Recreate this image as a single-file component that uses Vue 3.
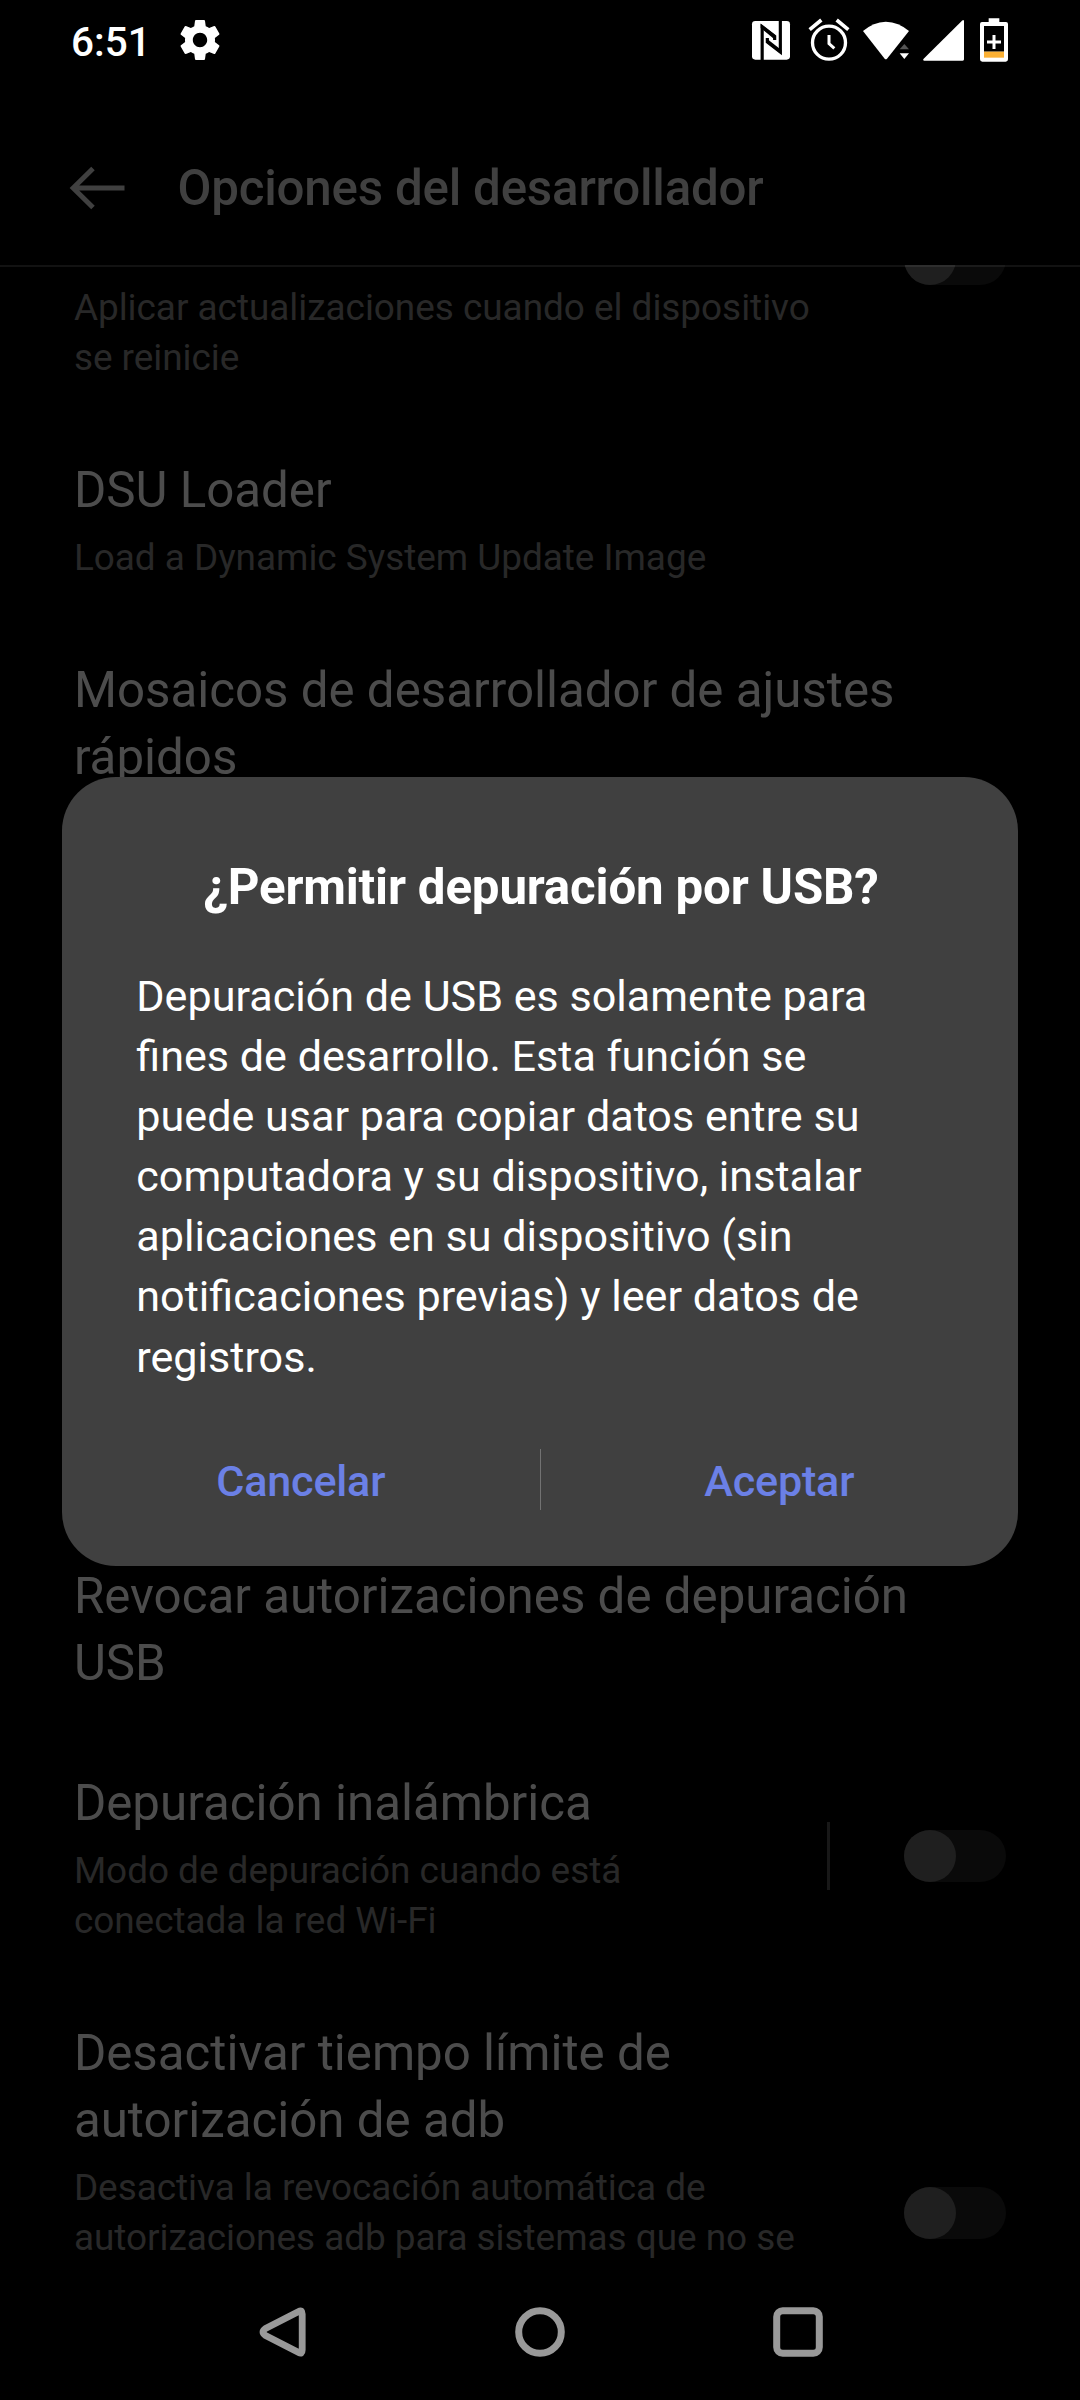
<script setup>
const items = [
  {
    summary: 'Aplicar actualizaciones cuando el dispositivo\nse reinicie',
    toggle: true,
    toggleTop: -32,
  },
  {
    title: 'DSU Loader',
    summary: 'Load a Dynamic System Update Image',
  },
  { title: 'Mosaicos de desarrollador de ajustes\nrápidos' },
  {
    title: 'Revocar autorizaciones de depuración\nUSB',
    gapBefore: 698,
  },
  {
    title: 'Depuración inalámbrica',
    summary: 'Modo de depuración cuando está\nconectada la red Wi-Fi',
    toggle: true,
    divider: true,
    toggleTop: 52,
    gapBefore: -1,
  },
  {
    title: 'Desactivar tiempo límite de\nautorización de adb',
    summary: 'Desactiva la revocación automática de\nautorizaciones adb para sistemas que no se',
    toggle: true,
    toggleTop: 167,
  },
]
</script>

<template>
  <div class="phone">
    <div class="statusbar">
      <div class="status-left">
        <span class="clock">6:51</span>
        <svg class="gear" width="48" height="48" viewBox="0 0 24 24" fill="#fff">
          <path d="M19.43 12.98c.04-.32.07-.64.07-.98s-.03-.66-.07-.98l2.11-1.65c.19-.15.24-.42.12-.64l-2-3.46c-.12-.22-.39-.3-.61-.22l-2.49 1c-.52-.4-1.080-.73-1.690-.98l-.38-2.650C14.460 2.180 14.250 2 14 2h-4c-.25 0-.46.18-.49.42l-.38 2.650c-.61.25-1.170.59-1.690.98l-2.490-1c-.23-.09-.49 0-.61.22l-2 3.460c-.13.22-.07.49.12.64l2.110 1.650c-.04.32-.07.65-.07.98s.03.66.07.98l-2.110 1.650c-.19.15-.24.42-.12.64l2 3.460c.12.22.39.3.61.22l2.490-1c.52.4 1.080.73 1.690.98l.38 2.650c.03.24.24.42.49.42h4c.25 0 .46-.18.49-.42l.38-2.650c.61-.25 1.170-.59 1.690-.98l2.490 1c.23.09.49 0 .61-.22l2-3.460c.12-.22.07-.49-.12-.64l-2.110-1.650zM12 15.600c-1.980 0-3.600-1.620-3.600-3.600s1.620-3.600 3.600-3.600 3.600 1.620 3.600 3.600-1.620 3.600-3.600 3.600z" />
        </svg>
      </div>
      <svg class="status-right" width="300" height="80" viewBox="0 0 900 240" fill="none">
        <!-- NFC -->
        <rect x="66" y="63" width="114" height="116" rx="10" fill="#fff" />
        <path d="M96.500 180V80L134 109V120" stroke="#000" stroke-width="9.500" />
        <path d="M92 72l43 33v14L92 84z" fill="#000" />
        <path d="M151 62V156L112 126V114" stroke="#000" stroke-width="9.500" />
        <path d="M155 163l-47-36v-13L155 151z" fill="#000" />
        <!-- Alarm -->
        <circle cx="297" cy="128" r="49.500" stroke="#fff" stroke-width="10" />
        <path d="M239 89L274 60M320 60L355 89" stroke="#fff" stroke-width="11" />
        <path d="M297 105V131L313 145" stroke="#fff" stroke-width="9" />
        <!-- Wi-Fi -->
        <path d="M399 93Q430 66 467.500 65Q506 66 537 93L471 176Q467.500 180 464 176Z" fill="#fff" />
        <path d="M509 148L523 132L537 148Z" fill="#545454" />
        <path d="M509 160H537L523 177Z" fill="#fff" />
        <!-- Mobile signal -->
        <path d="M583 182Q577 181 581 176L696 62Q701 58 702 63V178Q702 182 698 182Z" fill="#fff" />
        <!-- Battery -->
        <path d="M776 55H808V66H828Q834 66 834 72V178Q834 185 827 185H757Q750 185 750 178V72Q750 66 756 66H776Z" fill="#fff" />
        <rect x="762" y="78" width="60" height="77" fill="#000" />
        <rect x="762" y="155" width="60" height="18" fill="#fbb034" />
        <path d="M792 105V147M771 126H813" stroke="#fff" stroke-width="9" />
      </svg>
    </div>

    <header class="appbar">
      <svg class="back" width="60" height="48" viewBox="0 0 60 48" fill="none" stroke="#404040" stroke-width="5">
        <path d="M56.500 24H6M25 4.500L5.200 24L25 43.500" />
      </svg>
      <h1>Opciones del desarrollador</h1>
    </header>

    <main class="list">
      <section
        v-for="(item, i) in items"
        :key="i"
        class="item"
        :style="{ marginTop: (item.gapBefore || 0) + 'px' }"
      >
        <div class="texts">
          <h2 v-if="item.title">{{ item.title }}</h2>
          <p v-if="item.summary">{{ item.summary }}</p>
        </div>
        <div v-if="item.toggle" class="control" :style="{ marginTop: item.toggleTop + 'px' }">
          <span v-if="item.divider" class="bar"></span>
          <span class="switch"><span class="thumb"></span></span>
        </div>
      </section>
    </main>

    <nav class="navbar">
      <svg width="60" height="60" viewBox="-3.500 0 60 60" fill="none">
        <path d="M43.200 9.500Q46.700 7.500 46.700 12V48Q46.700 52.500 43.200 50.500L10 33.500Q5 30 10 26.500Z" stroke="#999" stroke-width="6.800" stroke-linejoin="round" />
      </svg>
      <svg width="60" height="60" viewBox="0 0 60 60" fill="none">
        <circle cx="30" cy="30" r="21.300" stroke="#999" stroke-width="7" />
      </svg>
      <svg width="60" height="60" viewBox="0 0 60 60" fill="none">
        <rect x="8.700" y="8.700" width="42.600" height="42.600" rx="6" stroke="#999" stroke-width="7" />
      </svg>
    </nav>

    <div class="dialog" role="dialog">
      <h3>¿Permitir depuración por USB?</h3>
      <p class="message">Depuración de USB es solamente para<br />fines de desarrollo. Esta función se<br />puede usar para copiar datos entre su<br />computadora y su dispositivo, instalar<br />aplicaciones en su dispositivo (sin<br />notificaciones previas) y leer datos de<br />registros.</p>
      <div class="actions">
        <button>Cancelar</button>
        <span class="sep"></span>
        <button>Aceptar</button>
      </div>
    </div>
  </div>
</template>

<style>
body {
  background: #000;
}
</style>

<style scoped>
.phone {
  position: relative;
  display: flex;
  flex-direction: column;
  width: 1080px;
  height: 2400px;
  overflow: hidden;
  background: #000;
  font-family: Roboto, sans-serif;
}
h1, h2, h3, p {
  margin: 0;
}
.statusbar {
  display: flex;
  justify-content: space-between;
  align-items: center;
  height: 80px;
  padding: 0 50px 0 71px;
}
.status-left {
  display: flex;
  align-items: center;
}
.clock {
  width: 104.500px;
  margin-top: 3px;
  font-size: 40.500px;
  font-weight: 500;
  line-height: 48px;
  color: #fff;
}
.status-right {
  display: block;
}
.appbar {
  display: flex;
  align-items: center;
  height: 185px;
  padding-left: 68px;
  box-sizing: border-box;
}
.back {
  margin-top: 31px;
}
.appbar h1 {
  margin: 31px 0 0 49.500px;
  font-size: 49.280px;
  font-weight: 500;
  letter-spacing: -0.200px;
  line-height: 60px;
  color: #404040;
}
.list {
  position: relative;
  flex: 1;
  overflow: hidden;
  padding-top: 18px;
}
.list::before {
  content: "";
  position: absolute;
  z-index: 1;
  top: 0;
  left: 0;
  right: 0;
  height: 2px;
  background: rgba(255, 255, 255, 0.07);
}
.item {
  display: flex;
  justify-content: space-between;
  align-items: flex-start;
  padding: 0 74px 74px 73.900px;
}
.item h2 {
  font-size: 49.280px;
  font-weight: 400;
  line-height: 67px;
  white-space: pre-line;
  color: #4c4c4c;
}
.item p {
  font-size: 36.960px;
  letter-spacing: -0.040px;
  line-height: 50px;
  white-space: pre-line;
  color: #282828;
}
.item h2 + p {
  margin-top: 9px;
}
.control {
  display: flex;
  align-items: center;
  gap: 74px;
}
.item:first-child .control {
  height: 20px;
  align-items: flex-start;
  margin-bottom: -20px;
  transform: translateY(-18px);
}
.bar {
  width: 3px;
  height: 68px;
  background: #181818;
}
.switch {
  width: 102px;
  height: 52px;
  border-radius: 26px;
  background: #0a0a0a;
}
.thumb {
  display: block;
  width: 52px;
  height: 52px;
  border-radius: 50%;
  background: #1f1f1f;
}
.navbar {
  display: flex;
  justify-content: center;
  align-items: center;
  gap: 198px;
  height: 136px;
}
.dialog {
  position: absolute;
  top: 777px;
  left: 62px;
  width: 956px;
  height: 789px;
  box-sizing: border-box;
  padding-top: 78px;
  border-radius: 54px;
  background: #404040;
  color: #fff;
}
.dialog h3 {
  padding-left: 2px;
  font-size: 49.280px;
  font-weight: 700;
  letter-spacing: -0.180px;
  line-height: 64px;
  text-align: center;
}
.message {
  padding: 48px 70px 0 74.300px;
  font-size: 43.120px;
  line-height: 60.100px;
}
.actions {
  display: flex;
  align-items: center;
  margin-top: 40px;
  height: 103px;
}
.actions button {
  flex: 1;
  padding: 6px 0 0;
  border: 0;
  background: none;
  font: 500 43.120px/60px Roboto, sans-serif;
  letter-spacing: -0.200px;
  color: #6b80e6;
}
.sep {
  width: 1px;
  height: 61px;
  background: #727272;
}
</style>
